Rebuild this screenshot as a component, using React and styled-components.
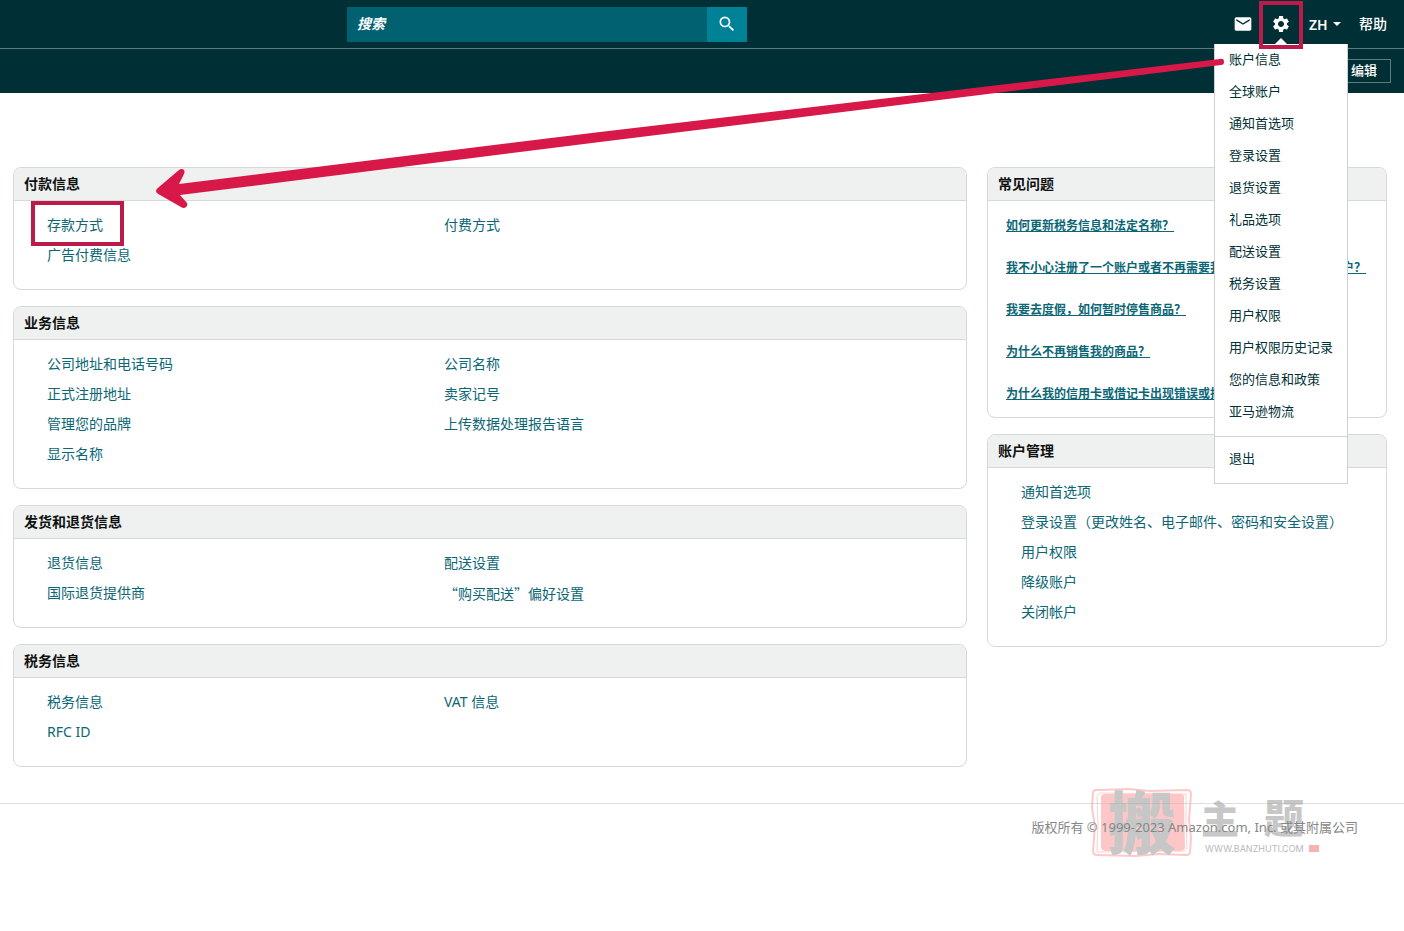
import { useCallback, useState } from "react";
import styled, { createGlobalStyle } from "styled-components";
import { MdMail, MdSearch, MdSettings } from "react-icons/md";

const GlobalStyle = createGlobalStyle`
    * {
        box-sizing: border-box;
    }
    body {
        margin: 0;
        background: #fff;
        color: #002f36;
        font-family: "Noto Sans", "Noto Sans CJK SC", sans-serif;
        font-size: 14px;
    }
    ul {
        list-style: none;
        margin: 0;
        padding: 0;
    }
    a {
        color: inherit;
        text-decoration: none;
    }
`

const Page = styled.div`
    position: relative;
    overflow-x: hidden;
    padding-bottom: 80px;
`

const TopBar = styled.header`
    display: flex;
    align-items: center;
    justify-content: space-between;
    height: 49px;
    padding: 0 17px 0 347px;
    background: #002f36;
    border-bottom: 1px solid #5c7c80;
    color: #fff;
`

const SearchForm = styled.form`
    display: flex;
    width: 400px;
    height: 35px;
`

const SearchInput = styled.input`
    flex: 1;
    min-width: 0;
    padding: 0 10px 2px;
    border: 0;
    background: #016171;
    color: #fff;
    font: italic 700 14px "Noto Sans", "Noto Sans CJK SC", sans-serif;
    &::placeholder {
        color: #fff;
        opacity: 1;
    }
`

const SearchButton = styled.button`
    display: flex;
    align-items: center;
    justify-content: center;
    width: 40px;
    padding: 0;
    border: 0;
    background: #008296;
    color: #fff;
`

const Actions = styled.nav`
    display: flex;
    align-items: center;
    gap: 18px;
`

const IconLink = styled.a`
    display: flex;
`

const Settings = styled.div`
    position: relative;
    display: flex;
`

const SettingsButton = styled.button`
    display: flex;
    padding: 0;
    border: 0;
    background: none;
    color: #fff;
`

const GearMark = styled.span`
    position: absolute;
    z-index: 3;
    top: -13px;
    left: -12px;
    width: 44px;
    height: 48px;
    border: 4px solid #bb1b48;
    pointer-events: none;
`

const Menu = styled.div`
    position: absolute;
    z-index: 2;
    top: 30px;
    left: 50%;
    transform: translateX(-50%);
    padding-bottom: 8px;
    border: 1px solid #cdd3d3;
    border-top: 0;
    background: #fff;
    color: #002f36;
    font-size: 13px;
    white-space: nowrap;
    &::before {
        content: "";
        position: absolute;
        bottom: 100%;
        left: 50%;
        margin-left: -6px;
        border: 6px solid transparent;
        border-top: 0;
        border-bottom-color: #fff;
    }
`

const MenuLink = styled.a`
    display: block;
    padding: 0 14px 2px;
    line-height: 30px;
`

const MenuFooter = styled.div`
    margin-top: 8px;
    padding-top: 6px;
    border-top: 1px solid #cdd3d3;
`

const Language = styled.label`
    display: flex;
    align-items: center;
    gap: 5px;
    &::after {
        content: "";
        border: 4px solid transparent;
        border-top-color: #fff;
        border-bottom: 0;
    }
`

const LanguageSelect = styled.select`
    appearance: none;
    padding: 0;
    border: 0;
    background: none;
    color: #fff;
    font: 600 14px "Noto Sans", sans-serif;
`

const HelpLink = styled.a`
    padding-bottom: 2px;
    font-weight: 500;
`

const SubBar = styled.div`
    display: flex;
    align-items: center;
    justify-content: flex-end;
    height: 44px;
    padding: 0 13px;
    background: #002f36;
`

const EditButton = styled.button`
    height: 24px;
    padding: 0 13px 2px;
    border: 1px solid #5c7c80;
    background: none;
    color: #fff;
    font: 500 13px "Noto Sans CJK SC", sans-serif;
    line-height: 20px;
`

const Content = styled.main`
    display: grid;
    grid-template-columns: 1fr 400px;
    align-items: start;
    gap: 20px;
    padding: 74px 17px 36px 13px;
`

const Column = styled.div`
    display: flex;
    flex-direction: column;
    gap: 16px;
`

const StyledCard = styled.section`
    border: 1px solid #d5d9d9;
    border-radius: 8px;
    background: #fff;
`

const CardTitle = styled.h2`
    margin: 0;
    height: 33px;
    padding: 0 10px;
    border-bottom: 1px solid #d5d9d9;
    border-radius: 7px 7px 0 0;
    background: #eff1f1;
    color: #0f1111;
    font-size: 14px;
    font-weight: 700;
    line-height: 32px;
`

const CardLinks = styled.div`
    display: grid;
    grid-template-columns: ${({ $split }) => $split ? '397px 1fr' : '1fr'};
    padding: 9px 0 19px 33px;
    color: #0b6675;
    line-height: 30px;
`

const LinkItem = styled.li`
    height: 30px;
`

const MarkedLink = styled.a`
    position: relative;
    &::after {
        content: "";
        position: absolute;
        top: -14px;
        bottom: -12px;
        left: -16px;
        right: -21px;
        border: 4px solid #bb1b48;
        pointer-events: none;
    }
`

const Questions = styled.ul`
    padding: 4px 18px 2px;
    color: #0b6675;
    font-family: "Noto Sans CJK SC", sans-serif;
    font-size: 12px;
    font-weight: 700;
    line-height: 40px;
    white-space: nowrap;
    li {
        height: 42px;
    }
    a {
        text-decoration: underline;
    }
`

const Footer = styled.footer`
    position: relative;
    padding: 13px 46px;
    border-top: 1px solid #dcdfdf;
    color: #858888;
    font-size: 13px;
    line-height: 20px;
    text-align: right;
`

const FooterText = styled.span`
    position: relative;
    z-index: 1;
`

const Stamp = styled.svg`
    position: absolute;
    top: -44px;
    right: 66px;
    pointer-events: none;
`

const Arrow = styled.svg`
    position: absolute;
    z-index: 4;
    top: 0;
    left: 0;
    pointer-events: none;
`

const menuItems = [
    '账户信息', '全球账户', '通知首选项', '登录设置', '退货设置', '礼品选项',
    '配送设置', '税务设置', '用户权限', '用户权限历史记录', '您的信息和政策', '亚马逊物流',
]

const sections = [
    {
        title: '付款信息',
        columns: [['存款方式', '广告付费信息'], ['付费方式']],
        marked: '存款方式',
    },
    {
        title: '业务信息',
        columns: [
            ['公司地址和电话号码', '正式注册地址', '管理您的品牌', '显示名称'],
            ['公司名称', '卖家记号', '上传数据处理报告语言'],
        ],
    },
    {
        title: '发货和退货信息',
        columns: [['退货信息', '国际退货提供商'], ['配送设置', '“购买配送”偏好设置']],
    },
    {
        title: '税务信息',
        columns: [['税务信息', 'RFC ID'], ['VAT 信息']],
    },
]

const questions = [
    '如何更新税务信息和法定名称？',
    '我不小心注册了一个账户或者不再需要我的账户，如何关闭该账户？',
    '我要去度假，如何暂时停售商品？',
    '为什么不再销售我的商品？',
    '为什么我的信用卡或借记卡出现错误或拒绝付款？',
]

const accountLinks = [
    ['通知首选项', '登录设置（更改姓名、电子邮件、密码和安全设置）', '用户权限', '降级账户', '关闭帐户'],
]

// Curly quotes take a full-width cell in Chinese text
const QuotedLink = styled.a`
    font-family: "Noto Sans CJK SC", sans-serif;
`

const pickLink = (label, marked) => {
    if (label === marked) return MarkedLink;
    return label.includes('“') ? QuotedLink : 'a';
}

const Card = ({ title, columns, marked }) => {
    return <StyledCard>
        <CardTitle>{title}</CardTitle>
        <CardLinks $split={columns.length > 1}>
            {columns.map((links, index) => <ul key={index}>
                {links.map(label => {
                    const Link = pickLink(label, marked);
                    return <LinkItem key={label}><Link href="#">{label}</Link></LinkItem>
                })}
            </ul>)}
        </CardLinks>
    </StyledCard>
}

const SettingsMenu = () => {
    const [open, updateOpen] = useState(true);

    const handleToggle = useCallback(() => {
        updateOpen(value => !value);
    }, [updateOpen]);

    return <Settings>
        <SettingsButton type="button" aria-label="设置" aria-expanded={open} onClick={handleToggle}>
            <MdSettings size={20} />
        </SettingsButton>
        {open ? <Menu>
            <ul>
                {menuItems.map(item => <li key={item}><MenuLink href="#">{item}</MenuLink></li>)}
            </ul>
            <MenuFooter><MenuLink href="#">退出</MenuLink></MenuFooter>
        </Menu> : null}
        <GearMark />
    </Settings>
}

const App = () => {
    const [query, updateQuery] = useState('');

    const handleQueryChange = useCallback((event) => {
        updateQuery(event.target.value);
    }, [updateQuery]);

    const handleSubmit = useCallback((event) => {
        event.preventDefault();
    }, []);

    return <Page lang="zh-CN">
        <GlobalStyle />
        <TopBar>
            <SearchForm role="search" onSubmit={handleSubmit}>
                <SearchInput aria-label="搜索" placeholder="搜索" value={query} onChange={handleQueryChange} />
                <SearchButton type="submit" aria-label="搜索"><MdSearch size={20} /></SearchButton>
            </SearchForm>
            <Actions>
                <IconLink href="#" aria-label="邮件"><MdMail size={20} /></IconLink>
                <SettingsMenu />
                <Language>
                    <LanguageSelect aria-label="语言" defaultValue="ZH">
                        <option>ZH</option>
                        <option>EN</option>
                    </LanguageSelect>
                </Language>
                <HelpLink href="#">帮助</HelpLink>
            </Actions>
        </TopBar>
        <SubBar>
            <EditButton type="button">编辑</EditButton>
        </SubBar>

        <Content>
            <Column>
                {sections.map(section => <Card key={section.title} {...section} />)}
            </Column>
            <Column>
                <StyledCard>
                    <CardTitle>常见问题</CardTitle>
                    <Questions>
                        {questions.map(question => <li key={question}><a href="#">{question}</a></li>)}
                    </Questions>
                </StyledCard>
                <Card title="账户管理" columns={accountLinks} />
            </Column>
        </Content>

        <Footer>
            <Stamp width="250" height="120" viewBox="0 0 250 120" aria-hidden="true">
                <g opacity="0.6">
                    <path d="M5 32Q6 29 12 30L40 29L62 31L99 30Q103 30 103 34L101 60L103 78L102 92Q102 95 98 95L70 94L48 96L9 95Q5 95 5 91L7 66L4 48Z" fill="none" stroke="#fba6a6" strokeWidth="2" />
                    <path d="M9 36L11 33L98 34L98 58L99 88L96 91L9 92L10 64Z" fill="none" stroke="#fcb4b4" strokeWidth="1" />
                    <path d="M13 36Q15 33 20 34L94 34Q97 35 96 40L97 88Q96 91 91 91L17 91Q12 90 13 85Z" fill="#fda3a3" />
                    <g fill="#a3a3a3" fontFamily="Noto Sans CJK SC, sans-serif" fontWeight="900">
                        <text x="20" y="89" fontSize="68">搬</text>
                        <text x="113" y="73" fontSize="38">主</text>
                        <text x="176" y="73" fontSize="40">题</text>
                    </g>
                    <text x="117" y="92" fontSize="9" fill="#8a8a8a" fontFamily="Inter, sans-serif">WWW.BANZHUTI.COM</text>
                    <rect x="221" y="85" width="10" height="7" fill="#f57f7f" />
                </g>
            </Stamp>
            <FooterText>版权所有 © 1999-2023 Amazon.com, Inc. 或其附属公司</FooterText>
        </Footer>

        <Arrow width="1404" height="220" viewBox="0 0 1404 220" aria-hidden="true">
            <path
                d="M156 191Q156 189 159 187L179 170Q182 168 184 170Q185 172 184 174L179 184L600 132L1220 59Q1224 58 1224 62Q1224 65 1221 65L600 142L180 195L187 203Q188 206 186 207Q184 209 181 207L160 195Q156 193 156 191Z"
                fill="#d81848"
            />
        </Arrow>
    </Page>
}

export default App;
